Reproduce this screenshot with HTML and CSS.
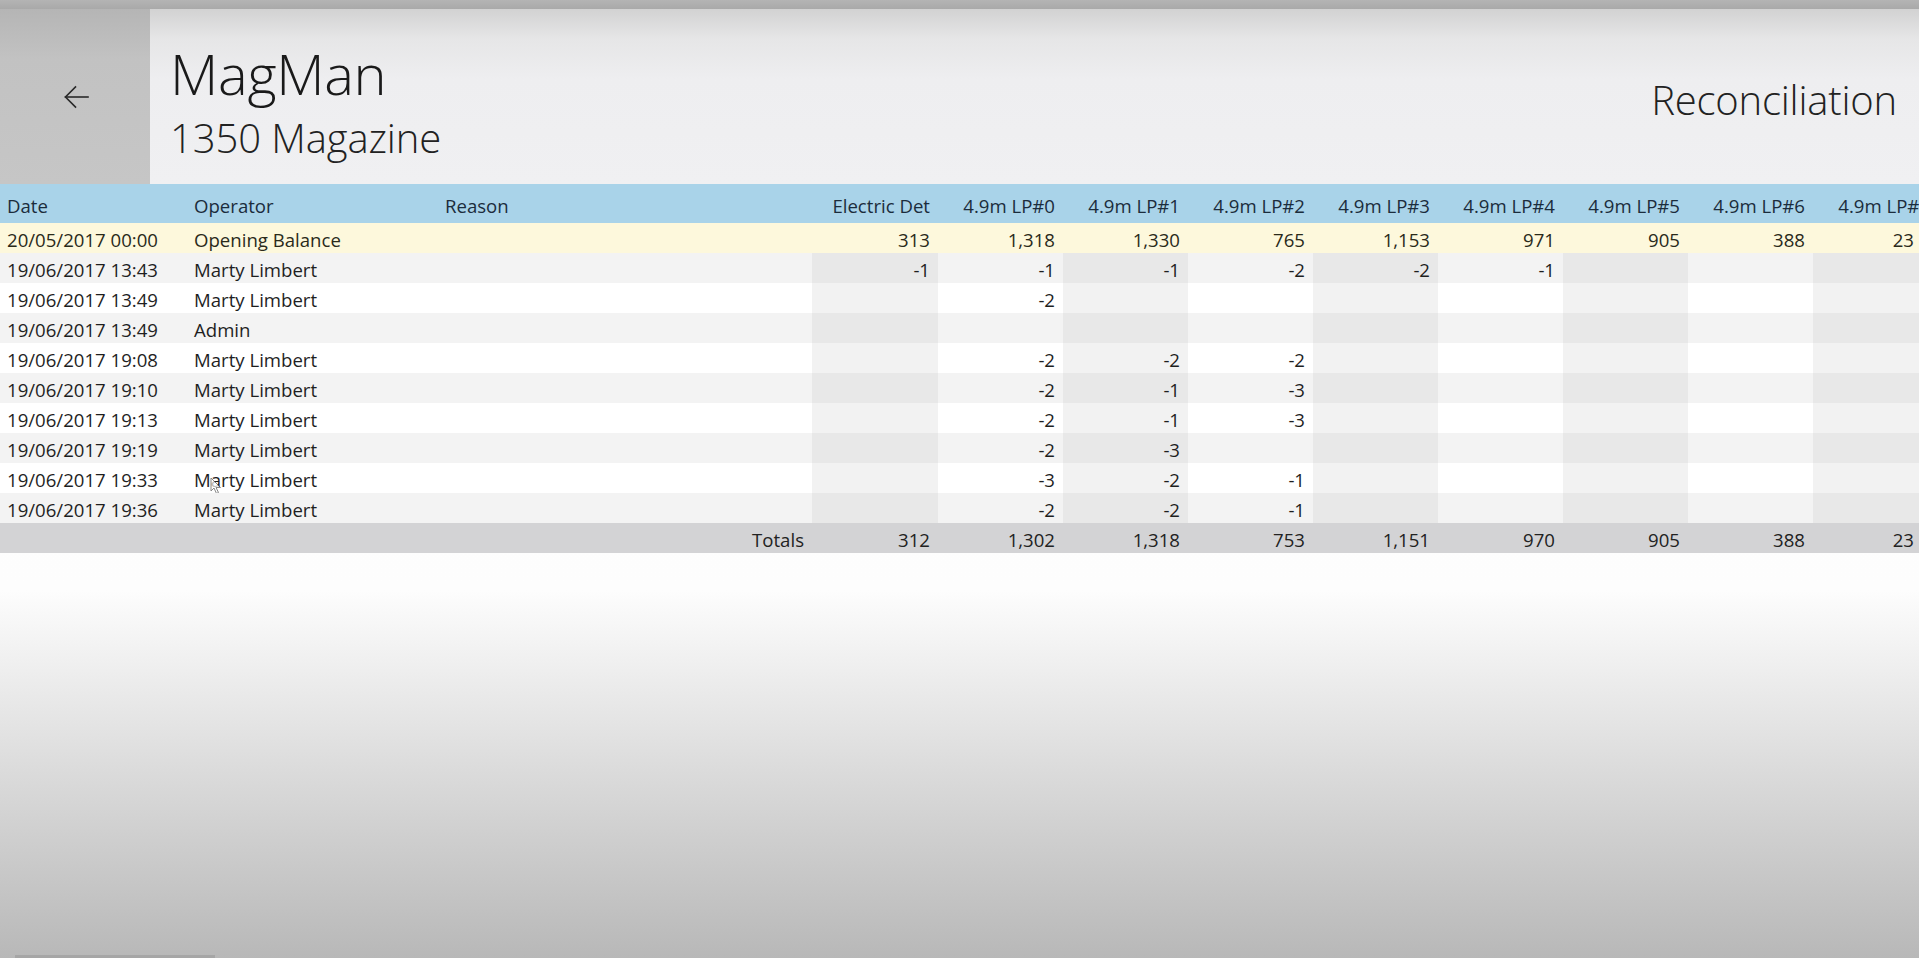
FILE: index.html
```html
<!DOCTYPE html>
<html lang="en">
<head>
<meta charset="utf-8">
<title>MagMan - Reconciliation</title>
<link rel="stylesheet" href="styles.css">
</head>
<body>
<div class="app">
  <div class="chrome"></div>
  <header class="topbar">
    <button class="back" aria-label="Back">
      <svg width="26" height="24" viewBox="0 0 26 24" fill="none" stroke="#2a2a2a" stroke-width="1.6" stroke-linecap="square">
        <path d="M2.5 12 H25"/>
        <path d="M12.5 2 L2.5 12 L12.5 22"/>
      </svg>
    </button>
    <div class="titles">
      <div class="app-name">MagMan</div>
      <div class="mag-name">1350 Magazine</div>
    </div>
    <div class="page-title">Reconciliation</div>
  </header>

  <div class="grid-wrap">
    <table class="grid">
      <colgroup>
        <col class="c-date"><col class="c-op"><col class="c-reason">
        <col class="c-ed"><col class="c-n"><col class="c-n"><col class="c-n"><col class="c-n"><col class="c-n"><col class="c-n"><col class="c-n"><col class="c-n">
      </colgroup>
      <thead>
        <tr>
          <th>Date</th><th>Operator</th><th>Reason</th>
          <th class="num">Electric Det</th><th class="num">4.9m LP#0</th><th class="num">4.9m LP#1</th><th class="num">4.9m LP#2</th><th class="num">4.9m LP#3</th><th class="num">4.9m LP#4</th><th class="num">4.9m LP#5</th><th class="num">4.9m LP#6</th><th class="num">4.9m LP#7</th>
        </tr>
      </thead>
      <tbody>
        <tr class="opening">
          <td>20/05/2017 00:00</td><td>Opening Balance</td><td></td>
          <td class="num">313</td><td class="num">1,318</td><td class="num">1,330</td><td class="num">765</td><td class="num">1,153</td><td class="num">971</td><td class="num">905</td><td class="num">388</td><td class="num last">23</td>
        </tr>
        <tr class="alt">
          <td>19/06/2017 13:43</td><td>Marty Limbert</td><td></td>
          <td class="num s">-1</td><td class="num">-1</td><td class="num s">-1</td><td class="num">-2</td><td class="num s">-2</td><td class="num">-1</td><td class="num s"></td><td class="num"></td><td class="num s"></td>
        </tr>
        <tr>
          <td>19/06/2017 13:49</td><td>Marty Limbert</td><td></td>
          <td class="num s"></td><td class="num">-2</td><td class="num s"></td><td class="num"></td><td class="num s"></td><td class="num"></td><td class="num s"></td><td class="num"></td><td class="num s"></td>
        </tr>
        <tr class="alt">
          <td>19/06/2017 13:49</td><td>Admin</td><td></td>
          <td class="num s"></td><td class="num"></td><td class="num s"></td><td class="num"></td><td class="num s"></td><td class="num"></td><td class="num s"></td><td class="num"></td><td class="num s"></td>
        </tr>
        <tr>
          <td>19/06/2017 19:08</td><td>Marty Limbert</td><td></td>
          <td class="num s"></td><td class="num">-2</td><td class="num s">-2</td><td class="num">-2</td><td class="num s"></td><td class="num"></td><td class="num s"></td><td class="num"></td><td class="num s"></td>
        </tr>
        <tr class="alt">
          <td>19/06/2017 19:10</td><td>Marty Limbert</td><td></td>
          <td class="num s"></td><td class="num">-2</td><td class="num s">-1</td><td class="num">-3</td><td class="num s"></td><td class="num"></td><td class="num s"></td><td class="num"></td><td class="num s"></td>
        </tr>
        <tr>
          <td>19/06/2017 19:13</td><td>Marty Limbert</td><td></td>
          <td class="num s"></td><td class="num">-2</td><td class="num s">-1</td><td class="num">-3</td><td class="num s"></td><td class="num"></td><td class="num s"></td><td class="num"></td><td class="num s"></td>
        </tr>
        <tr class="alt">
          <td>19/06/2017 19:19</td><td>Marty Limbert</td><td></td>
          <td class="num s"></td><td class="num">-2</td><td class="num s">-3</td><td class="num"></td><td class="num s"></td><td class="num"></td><td class="num s"></td><td class="num"></td><td class="num s"></td>
        </tr>
        <tr>
          <td>19/06/2017 19:33</td><td class="cursor-cell">Marty Limbert<svg class="cursor" width="12" height="18" viewBox="0 0 12 18"><path d="M1 1 L1 14 L4 11 L6.5 16.5 L8.5 15.5 L6 10.5 L10.5 10.5 Z" fill="#fff" stroke="#555" stroke-width="1"/></svg></td><td></td>
          <td class="num s"></td><td class="num">-3</td><td class="num s">-2</td><td class="num">-1</td><td class="num s"></td><td class="num"></td><td class="num s"></td><td class="num"></td><td class="num s"></td>
        </tr>
        <tr class="alt">
          <td>19/06/2017 19:36</td><td>Marty Limbert</td><td></td>
          <td class="num s"></td><td class="num">-2</td><td class="num s">-2</td><td class="num">-1</td><td class="num s"></td><td class="num"></td><td class="num s"></td><td class="num"></td><td class="num s"></td>
        </tr>
      </tbody>
      <tfoot>
        <tr>
          <td></td><td></td><td class="num">Totals</td>
          <td class="num">312</td><td class="num">1,302</td><td class="num">1,318</td><td class="num">753</td><td class="num">1,151</td><td class="num">970</td><td class="num">905</td><td class="num">388</td><td class="num last">23</td>
        </tr>
      </tfoot>
    </table>
  </div>
  <div class="progress"></div>
</div>
</body>
</html>
```

FILE: styles.css
```css
* { box-sizing: border-box; }

html, body {
  margin: 0;
  padding: 0;
  height: 100%;
}

body {
  font-family: "Open Sans", "Noto Sans", sans-serif;
  color: #1f1f1f;
  overflow: hidden;
  background: linear-gradient(to bottom, #ffffff 0, #fdfdfd 590px, #b8b8b8 958px);
}

.app {
  position: relative;
  width: 1919px;
  height: 958px;
  overflow: hidden;
}

.chrome {
  height: 9px;
  background: linear-gradient(to bottom, #b4b4b4, #a9a9a9);
}

.topbar {
  display: flex;
  align-items: stretch;
  height: 175px;
  background: linear-gradient(to bottom, #d2d2d2 0, #e6e6e7 30px, #eeeef0 70px, #f0f0f2 175px);
}

.back {
  width: 150px;
  flex: none;
  border: 0;
  margin: 0;
  padding: 0;
  display: flex;
  align-items: center;
  justify-content: center;
  background: linear-gradient(to bottom, #b5b5b5 0, #c2c2c2 50px, #c6c6c6 175px);
}

.back svg {
  display: block;
  margin-left: 1px;
}

.titles {
  padding-left: 20px;
  padding-top: 33px;
  display: flex;
  flex-direction: column;
}

.app-name {
  font-weight: 300;
  font-size: 56px;
  line-height: 62px;
  color: #1a1a1a;
  letter-spacing: -0.3px;
}

.mag-name {
  font-weight: 300;
  font-size: 40px;
  line-height: 46px;
  margin-top: 11px;
  color: #222;
  letter-spacing: -0.1px;
}

.page-title {
  margin-left: auto;
  padding-right: 22px;
  padding-top: 67px;
  font-weight: 300;
  font-size: 40px;
  line-height: 48px;
  color: #222;
  letter-spacing: -0.2px;
}

.grid-wrap {
  width: 1919px;
  overflow: hidden;
}

.grid {
  table-layout: fixed;
  border-collapse: collapse;
  width: 1938px;
  font-size: 18.6px;
}

.c-date { width: 187px; }
.c-op { width: 251px; }
.c-reason { width: 374px; }
.c-ed { width: 126px; }
.c-n { width: 125px; }

.grid th,
.grid td {
  padding: 2px 8px 0 7px;
  text-align: left;
  white-space: nowrap;
  overflow: hidden;
  font-weight: 400;
}

.grid .num {
  text-align: right;
}

.grid td.last {
  padding-right: 24px;
}

.grid thead th {
  height: 39px;
  background: #a9d3e9;
  color: #1b2c3c;
  padding-top: 3px;
}

.grid tbody td {
  height: 30px;
  background: #ffffff;
}

.grid tbody tr.alt td {
  background: #f3f3f3;
}

.grid tbody td.s {
  background: #f2f2f2;
}

.grid tbody tr.alt td.s {
  background: #e8e8e8;
}

.grid tbody tr.opening td {
  background: #fdf8dc;
  color: #2a2a1a;
}

.grid tfoot td {
  height: 30px;
  background: #d3d3d5;
  color: #222;
}

.cursor-cell {
  position: relative;
}

.cursor {
  position: absolute;
  left: 23px;
  top: 14px;
  opacity: 0.7;
}

.progress {
  position: absolute;
  left: 15px;
  bottom: 0;
  width: 200px;
  height: 3px;
  background: #a6a6a6;
}
```
